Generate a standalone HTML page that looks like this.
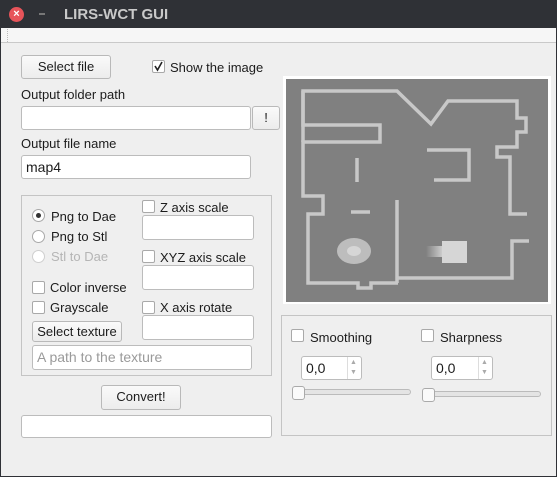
<!DOCTYPE html>
<html><head><style>
*{box-sizing:border-box;margin:0;padding:0}
body{width:557px;height:477px;overflow:hidden;background:#2f3136;font-family:"Liberation Sans",sans-serif;font-size:13px;color:#1c1c1c;position:relative}
.a{position:absolute}
#win{left:1px;top:28px;width:555px;height:448px;background:#efefef}
.btn{position:absolute;border:1px solid #b9b9b9;border-radius:3px;background:linear-gradient(#fafafa,#ececec);text-align:center;line-height:22px}
.in{position:absolute;border:1px solid #bcbcbc;border-radius:3px;background:#fff;padding-left:4px}
.cb{position:absolute;width:13px;height:13px;border:1px solid #a9a9a9;border-radius:2px;background:#fff}
.rd{position:absolute;width:13px;height:13px;border:1px solid #a9a9a9;border-radius:50%;background:#fff}
.t{position:absolute;white-space:nowrap}
.gb{position:absolute;border:1px solid #c4c4c4}
</style></head><body>
<div class="a" style="left:9px;top:7px;width:15px;height:15px;border-radius:50%;background:#e7545a;color:#fff;font-size:11px;text-align:center;line-height:15px;font-weight:bold">×</div>
<div class="a" style="left:39px;top:13px;width:6px;height:2px;background:#777"></div>
<div class="t" style="left:64px;top:6px;color:#c9c9c9;font-weight:bold;font-size:15px">LIRS-WCT GUI</div>
<div id="win" class="a"></div>
<div class="a" style="left:1px;top:28px;width:555px;height:15px;background:#f6f6f6;border-bottom:1px solid #c9c9c9"></div>
<div class="a" style="left:7px;top:29px;width:2px;height:13px;border-left:1px dotted #bbb"></div>

<div class="btn" style="left:21px;top:55px;width:90px;height:24px">Select file</div>
<div class="cb" style="left:152px;top:60px"></div>
<svg class="a" style="left:152px;top:60px" width="13" height="13"><polyline points="3,6 5.5,10 10,2" fill="none" stroke="#222" stroke-width="1.6"/></svg>
<div class="t" style="left:170px;top:60px">Show the image</div>
<div class="t" style="left:21px;top:87px">Output folder path</div>
<div class="in" style="left:21px;top:106px;width:230px;height:24px"></div>
<div class="btn" style="left:252px;top:106px;width:28px;height:24px">!</div>
<div class="t" style="left:21px;top:136px">Output file name</div>
<div class="in" style="left:21px;top:155px;width:230px;height:24px;line-height:22px;font-size:14px">map4</div>

<div class="gb" style="left:21px;top:195px;width:251px;height:181px"></div>
<div class="rd" style="left:32px;top:209px"></div><div class="a" style="left:36px;top:213px;width:5px;height:5px;border-radius:50%;background:#333"></div>
<div class="t" style="left:51px;top:209px">Png to Dae</div>
<div class="rd" style="left:32px;top:230px"></div><div class="t" style="left:51px;top:229px">Png to Stl</div>
<div class="rd" style="left:32px;top:250px;border-color:#cfcfcf"></div><div class="t" style="left:51px;top:249px;color:#b5b5b5">Stl to Dae</div>
<div class="cb" style="left:142px;top:200px"></div><div class="t" style="left:160px;top:200px">Z axis scale</div>
<div class="in" style="left:142px;top:215px;width:112px;height:25px"></div>
<div class="cb" style="left:142px;top:250px"></div><div class="t" style="left:160px;top:250px">XYZ axis scale</div>
<div class="in" style="left:142px;top:265px;width:112px;height:25px"></div>
<div class="cb" style="left:32px;top:281px"></div><div class="t" style="left:50px;top:280px">Color inverse</div>
<div class="cb" style="left:32px;top:301px"></div><div class="t" style="left:50px;top:300px">Grayscale</div>
<div class="cb" style="left:142px;top:301px"></div><div class="t" style="left:160px;top:300px">X axis rotate</div>
<div class="in" style="left:142px;top:315px;width:112px;height:25px"></div>
<div class="btn" style="left:32px;top:321px;width:90px;height:21px;line-height:19px">Select texture</div>
<div class="in" style="left:32px;top:345px;width:220px;height:25px;line-height:23px;color:#9a9a9a;font-size:14px">A path to the texture</div>

<div class="btn" style="left:101px;top:385px;width:80px;height:25px">Convert!</div>
<div class="in" style="left:21px;top:415px;width:251px;height:23px"></div>

<div class="a" style="left:283px;top:76px;width:268px;height:228px;background:#fff"></div>
<svg class="a" style="left:286px;top:79px" width="262" height="223" viewBox="286 79 262 223">
<defs><linearGradient id="g"><stop offset="0" stop-color="#808080"/><stop offset="1" stop-color="#d0d0d0"/></linearGradient></defs>
<rect x="286" y="79" width="262" height="223" fill="#808080"/>
<g fill="none" stroke="#c8c8c8" stroke-width="3.5">
<polyline points="303,142 303,91 397,91 431,124 448,101 517,101 517,118 526,118 526,132 517,132 517,147 497,147 497,157 510,157 510,214 527,214"/>
<polyline points="303,91 303,125 380,125 380,142 303,142 303,196 323,196 323,214 308,214 308,283 358,283 358,288 371,288 371,283 398,283"/>
<line x1="397" y1="200" x2="397" y2="283"/>
<polyline points="398,278 512,278 512,241 529,241"/>
<polyline points="427,150 469,150 469,180 434,180"/>
<line x1="357" y1="158" x2="357" y2="182"/>
<line x1="351" y1="212" x2="370" y2="212"/>
</g>
<ellipse cx="354" cy="251" rx="17" ry="13" fill="#bdbdbd"/>
<ellipse cx="354" cy="251" rx="7" ry="5" fill="#d6d6d6"/>
<rect x="426" y="246" width="17" height="11" fill="url(#g)"/>
<rect x="442" y="241" width="25" height="22" fill="#d6d6d6"/>
</svg>

<div class="gb" style="left:281px;top:315px;width:271px;height:121px"></div>
<div class="cb" style="left:291px;top:329px"></div><div class="t" style="left:310px;top:330px">Smoothing</div>
<div class="cb" style="left:421px;top:329px"></div><div class="t" style="left:440px;top:330px">Sharpness</div>
<div class="in" style="left:301px;top:356px;width:61px;height:24px;line-height:22px;font-size:14px">0,0</div>
<div class="a" style="left:347px;top:357px;width:1px;height:22px;background:#ddd"></div>
<div class="t" style="left:350px;top:358px;font-size:7px;color:#aaa;line-height:10px">▲<br>▼</div>
<div class="in" style="left:431px;top:356px;width:62px;height:24px;line-height:22px;font-size:14px">0,0</div>
<div class="a" style="left:478px;top:357px;width:1px;height:22px;background:#ddd"></div>
<div class="t" style="left:481px;top:358px;font-size:7px;color:#aaa;line-height:10px">▲<br>▼</div>
<div class="a" style="left:292px;top:389px;width:119px;height:6px;border:1px solid #bbb;border-radius:3px;background:#e4e4e4"></div>
<div class="a" style="left:292px;top:386px;width:13px;height:14px;border:1px solid #aaa;border-radius:3px;background:#fafafa"></div>
<div class="a" style="left:422px;top:391px;width:119px;height:6px;border:1px solid #bbb;border-radius:3px;background:#e4e4e4"></div>
<div class="a" style="left:422px;top:388px;width:13px;height:14px;border:1px solid #aaa;border-radius:3px;background:#fafafa"></div>
</body></html>
